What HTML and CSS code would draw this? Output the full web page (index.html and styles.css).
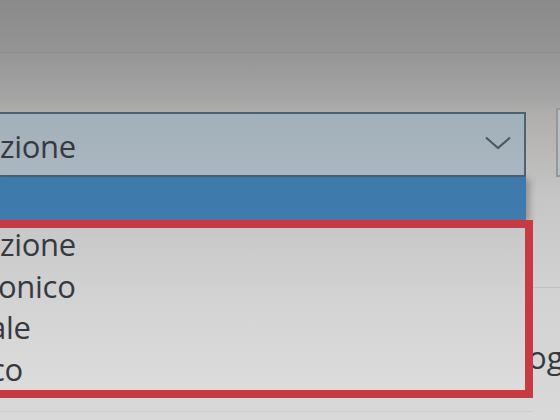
FILE: index.html
```html
<!DOCTYPE html>
<html lang="it">

<head>
    <meta charset="UTF-8">
    <meta name="viewport" content="width=device-width, initial-scale=1.0">
    <title>Selezione</title>
    <link rel="stylesheet" href="styles.css">
</head>

<body>
    <div class="screen">
        <div class="top">
            <div class="rule"></div>
        </div>

        <div class="combo-row">
            <div class="combo">
                <span class="combo-value">zione</span>
                <svg class="chevron" width="26" height="14" viewBox="0 0 26 14">
                    <polyline points="1,1.5 13,12 25,1.5" fill="none" stroke="#4d5962" stroke-width="2.2" />
                </svg>
            </div>
            <div class="side-box"></div>
        </div>

        <div class="lower-row">
            <div class="dropdown">
                <div class="selected-band"></div>
                <div class="options-frame">
                    <ul class="options">
                        <li>zione</li>
                        <li>onico</li>
                        <li>ale</li>
                        <li>co</li>
                    </ul>
                </div>
                <div class="bottom-rule"></div>
            </div>
            <div class="side">
                <div class="side-rule"></div>
                <div class="side-label">og</div>
            </div>
        </div>
    </div>
</body>

</html>
```

FILE: styles.css
```css
body {
    margin: 0;
    background-color: #d8d8d8;
}

.screen {
    width: 560px;
    height: 420px;
    overflow: hidden;
    font-family: "Open Sans", "Noto Sans", sans-serif;
    color: #363a40;
    background: linear-gradient(#8a8a8a 0, #949494 50px, #a6a6a6 100px, #b0aeac 112px, #c6c6c6 200px, #d3d3d3 300px, #d9d9d9 420px);
}

.top {
    height: 112px;
    box-sizing: border-box;
    padding-top: 52px;
}

.rule {
    height: 1px;
    background-color: rgba(0, 0, 0, 0.05);
}

.combo-row {
    display: flex;
    height: 65px;
}

.combo {
    width: 526px;
    box-sizing: border-box;
    border: 2px solid #4e6171;
    border-left: none;
    background: linear-gradient(#a2b0ba, #aab7c1);
    display: flex;
    align-items: center;
    justify-content: space-between;
    padding: 2px 13px 0 0;
    font-size: 31px;
    letter-spacing: -0.3px;
}

.chevron {
    display: block;
    margin-top: -6px;
}

.side-box {
    flex: 1;
    margin: -4px 0 0 30px;
    height: 69px;
    box-sizing: border-box;
    border: 2px solid #8f999f;
    border-right: none;
    background-color: #bcc0c3;
}

.lower-row {
    display: flex;
}

.dropdown {
    width: 533px;
}

.selected-band {
    width: 526px;
    height: 43px;
    background: linear-gradient(#3d79aa, #3f7cad);
    box-shadow: 4px 2px 6px rgba(60, 60, 60, 0.35);
}

.options-frame {
    height: 178px;
    box-sizing: border-box;
    border: 8px solid #c83a43;
    border-left: none;
    background: linear-gradient(#c8c8c8, #d4d4d4 50%, #dcdcdc);
    overflow: hidden;
}

.options {
    list-style: none;
    margin: -4px 0 0;
    padding: 0;
    font-size: 31px;
    line-height: 41.5px;
    letter-spacing: -0.3px;
}

/* words are cut by the left edge of the photo */
.options li:nth-child(2) {
    text-indent: -2px;
}

.options li:nth-child(3) {
    text-indent: -11px;
}

.options li:nth-child(4) {
    text-indent: -10px;
}

.bottom-rule {
    margin-top: 13px;
    height: 1px;
    background-color: rgba(0, 0, 0, 0.06);
}

.side {
    flex: 1;
    overflow: hidden;
}

.side-rule {
    margin-top: 110px;
    height: 1px;
    background-color: rgba(0, 0, 0, 0.08);
}

.side-label {
    margin: 49px 0 0 -5px;
    font-size: 31px;
    line-height: 41px;
    white-space: nowrap;
}
```
